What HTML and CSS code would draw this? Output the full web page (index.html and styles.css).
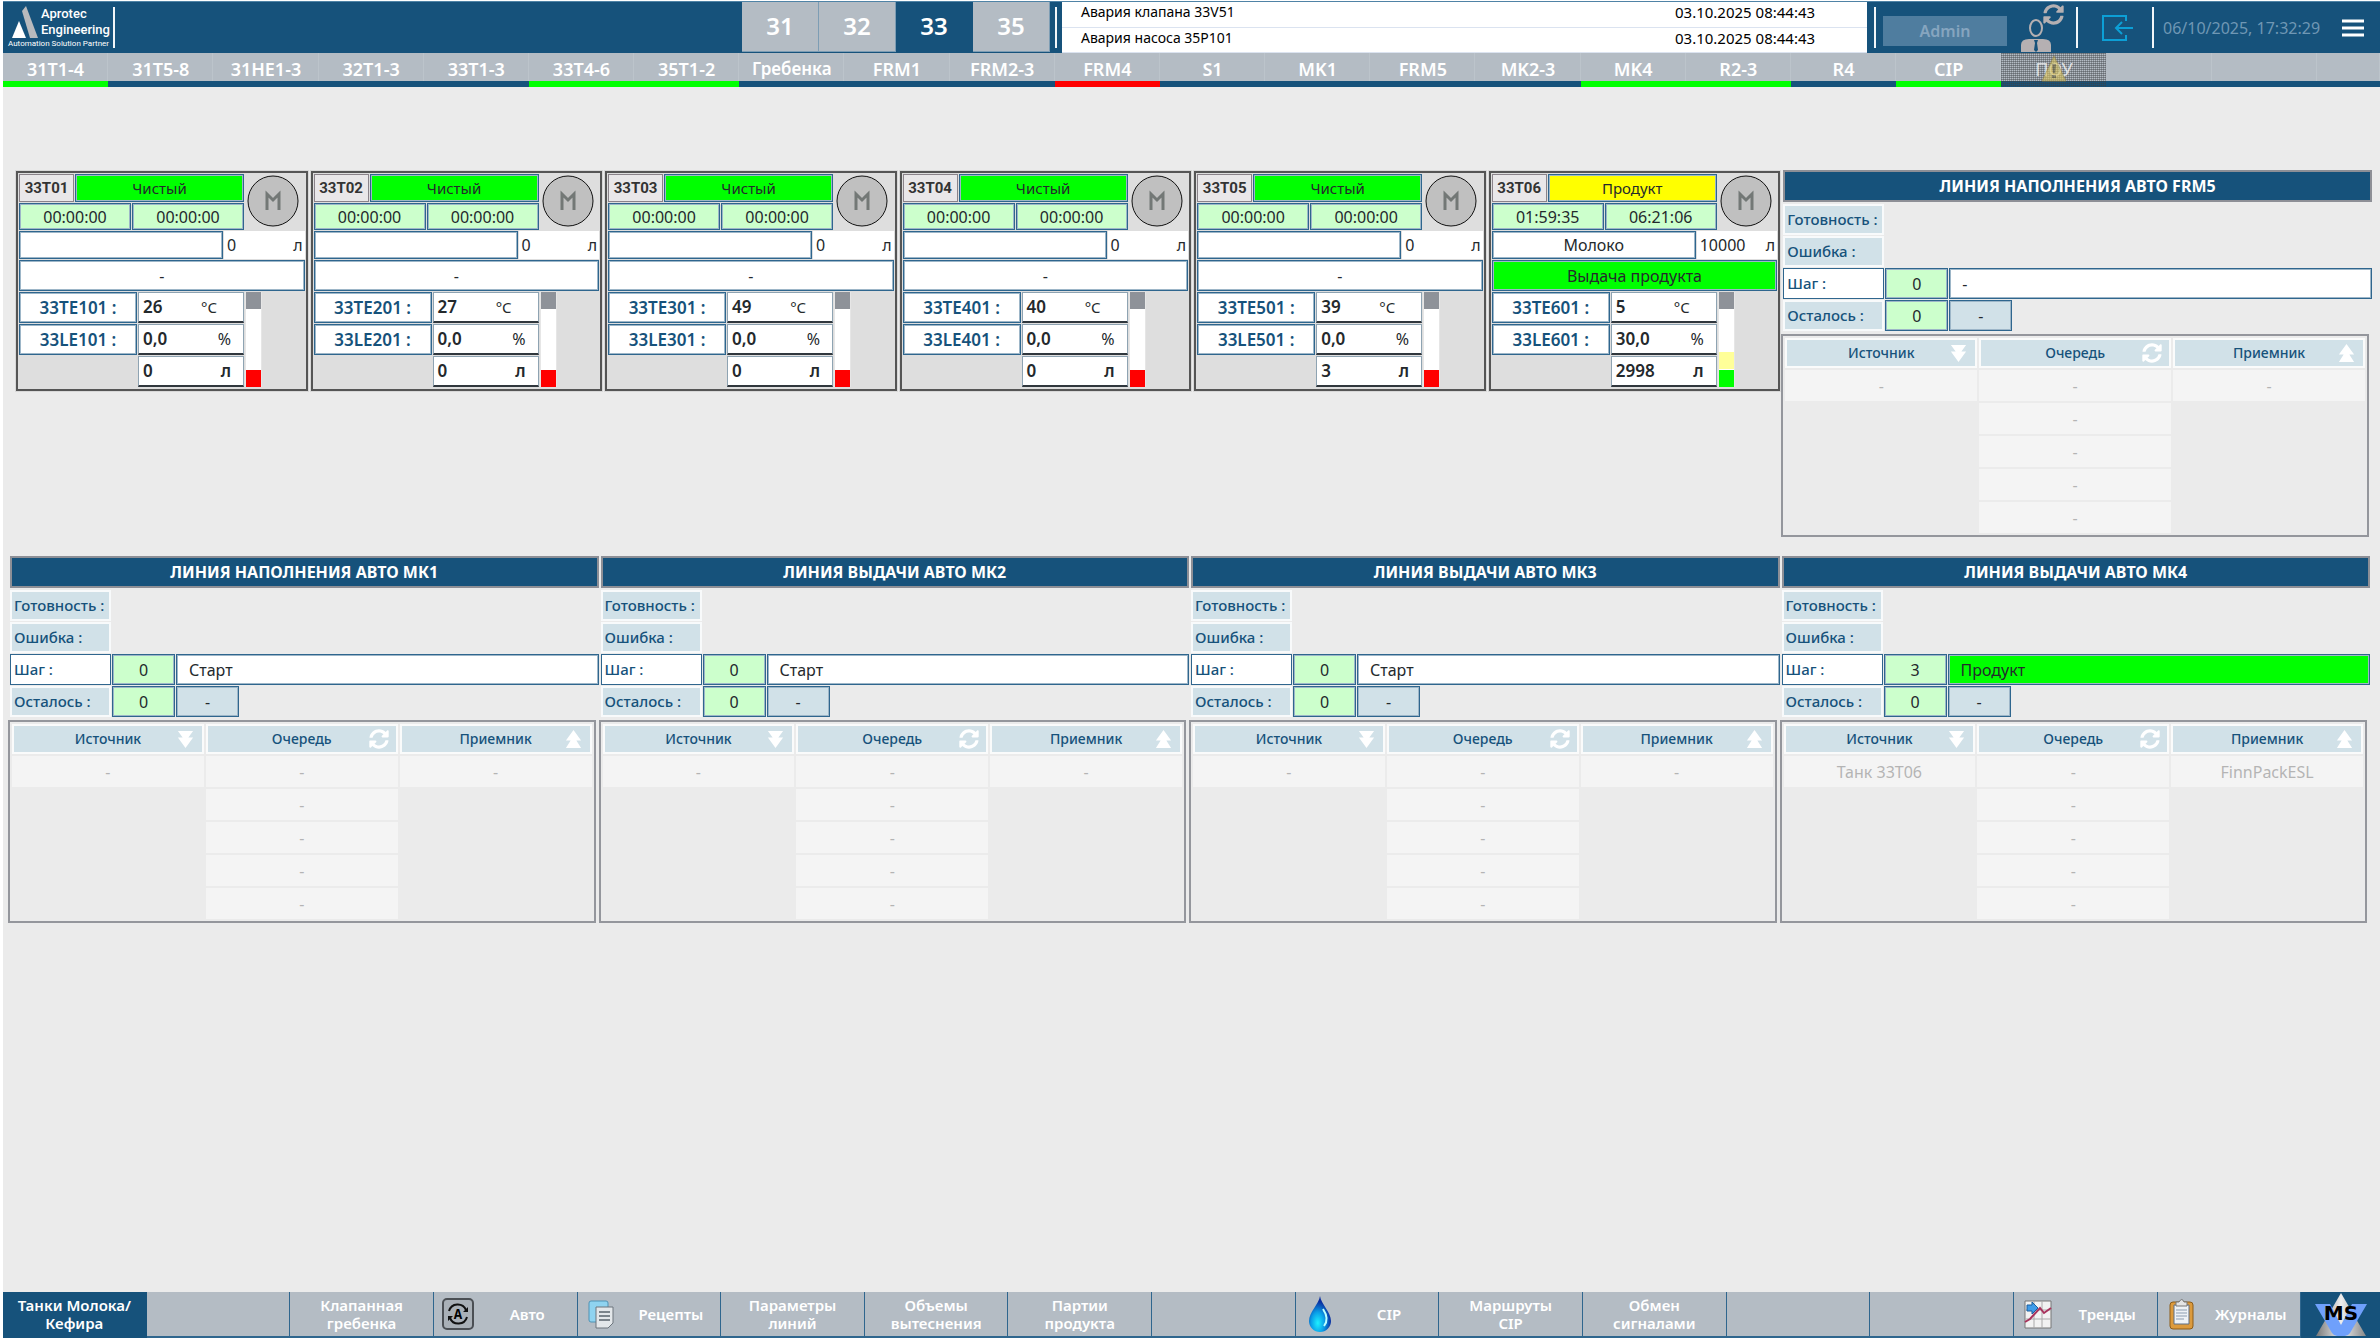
FILE: index.html
```html
<!DOCTYPE html>
<html lang="ru">
<head>
<meta charset="utf-8">
<meta name="viewport" content="width=device-width, initial-scale=1">
<title>Танки Молока/Кефира</title>
<link rel="stylesheet" href="styles.css">
</head>
<body>
<svg class="sprite" aria-hidden="true">
  <symbol id="i-sync" viewBox="0 0 512 512"><path fill="currentColor" d="M370.72 133.28C339.458 104.008 298.888 87.962 255.848 88c-77.458.068-144.328 53.178-162.791 126.85-1.344 5.363-6.122 9.15-11.651 9.15H24.103c-7.498 0-13.194-6.807-11.807-14.176C33.933 94.924 134.813 8 256 8c66.448 0 126.791 26.136 171.315 68.685L463.03 40.97C478.149 25.851 504 36.559 504 57.941V192c0 13.255-10.745 24-24 24H345.941c-21.382 0-32.09-25.851-16.971-40.971l41.75-41.749zM32 296h134.059c21.382 0 32.09 25.851 16.971 40.971l-41.75 41.75c31.262 29.273 71.835 45.319 114.876 45.28 77.418-.07 144.315-53.144 162.787-126.849 1.344-5.363 6.122-9.15 11.651-9.15h57.304c7.498 0 13.194 6.807 11.807 14.176C478.067 417.076 377.187 504 256 504c-66.448 0-126.791-26.136-171.315-68.685L48.97 471.03C33.851 486.149 8 475.441 8 454.059V320c0-13.255 10.745-24 24-24z"/></symbol>
  <symbol id="i-down" viewBox="0 0 20 20"><path fill="currentColor" d="M2 1h16l-5 7h5l-8 11L2 8h5z"/></symbol>
  <symbol id="i-up" viewBox="0 0 20 20"><path fill="currentColor" d="M2 19h16l-5-8h5L10 0 2 11h5z"/></symbol>
</svg>

<header class="top">
  <a class="brand" href="#">
    <svg class="brand-mark" viewBox="0 0 28 32" aria-hidden="true"><path fill="#b9babd" d="M10 5l4-5 12 32H18z"/><path fill="#fff" d="M0 32l7-17 7 17z"/></svg>
    <span class="brand-name">Aprotec<br>Engineering</span>
    <span class="brand-tag">Automation Solution Partner</span>
  </a>
  <i class="rule"></i>
  <div class="areas">
    <button type="button">31</button>
    <button type="button">32</button>
    <button type="button" class="is-on">33</button>
    <button type="button">35</button>
  </div>
  <i class="rule"></i>
  <table class="alarms">
    <tr><td>Авария клапана 33V51</td><td class="when">03.10.2025 08:44:43</td></tr>
    <tr><td>Авария насоса 35P101</td><td class="when">03.10.2025 08:44:43</td></tr>
  </table>
  <div class="session">
    <i class="rule"></i>
    <button type="button" class="user" disabled>Admin</button>
    <button type="button" class="icon-btn" aria-label="Сменить пользователя">
      <svg width="46" height="48" viewBox="0 0 46 48">
        <ellipse cx="15" cy="24" rx="6" ry="8" fill="none" stroke="#b5b0b2" stroke-width="2"/>
        <path fill="#b5b0b2" d="M0 48v-7q0-6 8-6h14q8 0 8 6v7z"/>
        <path fill="#16527b" d="M13 36h4l-1 3 1 7-2 2-2-2 1-7z"/>
        <use href="#i-sync" x="22" y="0" width="21" height="21" color="#b5b0b2"/>
      </svg>
    </button>
    <i class="rule"></i>
    <button type="button" class="icon-btn" aria-label="Выход">
      <svg width="33" height="28" viewBox="0 0 33 28" fill="none" stroke="#0c9fd6" stroke-width="2"><path d="M25 7V2H2v24h23v-5M32 14H15M21 8l-6 6 6 6"/></svg>
    </button>
    <i class="rule"></i>
    <time class="clock">06/10/2025, 17:32:29</time>
    <button type="button" class="icon-btn menu" aria-label="Меню">
      <svg width="22" height="18" viewBox="0 0 22 18" stroke="#fff" stroke-width="3"><path d="M0 2h22M0 9h22M0 16h22"/></svg>
    </button>
  </div>
</header>

<nav class="tabs">
  <a href="#" class="ok">31T1-4</a><a href="#">31T5-8</a><a href="#">31HE1-3</a><a href="#">32T1-3</a><a href="#">33T1-3</a><a href="#" class="ok">33T4-6</a><a href="#" class="ok">35T1-2</a><a href="#" class="small">Гребенка</a><a href="#">FRM1</a><a href="#">FRM2-3</a><a href="#" class="alarm">FRM4</a><a href="#">S1</a><a href="#">MK1</a><a href="#">FRM5</a><a href="#">MK2-3</a><a href="#" class="ok">MK4</a><a href="#" class="ok">R2-3</a><a href="#">R4</a><a href="#" class="ok">CIP</a><a href="#" class="blocked"><span>ПОУ</span><svg class="warn" width="28" height="28" viewBox="0 0 28 28" aria-hidden="true"><path fill="#d9c35a" stroke="#a08c3c" d="M14 1l12 25H2z"/><path fill="#6f6637" d="M12 9h4l-1 9h-2zM12 20h4v3h-4z"/></svg></a><a href="#"></a><a href="#"></a><a href="#" class="cut"></a>
</nav>

<main>
  <section class="upper">
    <div class="tanks" id="tanks"></div>
    <div id="line-top"></div>
  </section>
  <section class="lines" id="lines"></section>
</main>

<footer class="bottom">
  <a href="#" class="is-on">Танки Молока/<br>Кефира</a>
  <a href="#"></a>
  <a href="#">Клапанная<br>гребенка</a>
  <a href="#" class="with-icon">
    <svg width="32" height="32" viewBox="0 0 32 32" aria-hidden="true"><rect x="1" y="1" width="30" height="30" rx="4" fill="#a9b0b7" stroke="#4b4f54" stroke-width="2"/><path d="M7 13a9 9 0 0 1 17-1M25 19a9 9 0 0 1-17 1" fill="none" stroke="#111" stroke-width="2"/><path d="M26 9v5h-5zM6 23v-5h5z" fill="#111"/><text x="16" y="21" class="auto-a">A</text></svg>
    <span>Авто</span></a>
  <a href="#" class="with-icon">
    <svg width="32" height="32" viewBox="0 0 32 32" aria-hidden="true"><rect x="3" y="3" width="19" height="21" rx="2" fill="#8fd3f0" stroke="#4f93b5"/><path d="M10 9h17v16l-5 5H10z" fill="#e3e7ea" stroke="#6c757d"/><path d="M13 14h11M13 18h11M13 22h11" stroke="#7b848b" stroke-width="2"/></svg>
    <span>Рецепты</span></a>
  <a href="#">Параметры<br>линий</a>
  <a href="#">Объемы<br>вытеснения</a>
  <a href="#">Партии<br>продукта</a>
  <a href="#"></a>
  <a href="#" class="with-icon">
    <svg width="32" height="36" viewBox="0 0 32 36" aria-hidden="true"><defs><radialGradient id="drop" cx=".4" cy=".75" r=".6"><stop offset="0" stop-color="#1ef0ff"/><stop offset=".5" stop-color="#0a9fe8"/><stop offset="1" stop-color="#0a2ea0"/></radialGradient></defs><path fill="url(#drop)" d="M16 0c1 8 11 16 11 25a11 11 0 0 1-22 0C5 16 15 8 16 0z"/><path d="M19 13c4 6 5 12 1 17" fill="none" stroke="#bff" stroke-width="2"/></svg>
    <span>CIP</span></a>
  <a href="#">Маршруты<br>CIP</a>
  <a href="#">Обмен<br>сигналами</a>
  <a href="#"></a>
  <a href="#"></a>
  <a href="#" class="with-icon">
    <svg width="32" height="32" viewBox="0 0 32 32" aria-hidden="true"><path fill="#f2f2f2" stroke="#777" d="M3 3h26v27H3z"/><path d="M12 3v27M20 3v27M3 12h26M3 21h26" stroke="#aaa"/><path d="M3 24l5-3 10-11 4 5 7-5" fill="none" stroke="#a8325c" stroke-width="2"/><path d="M5 7h5V4l6 6-6 6v-3H5z" fill="#3f9be8" stroke="#1c5f9e"/></svg>
    <span>Тренды</span></a>
  <a href="#" class="with-icon">
    <svg width="32" height="32" viewBox="0 0 32 32" aria-hidden="true"><rect x="4" y="4" width="23" height="27" rx="3" fill="#dc9a3c" stroke="#8d5c18"/><path fill="#eef2f6" stroke="#5f6f82" d="M8 7h15v19H8z"/><path d="M10 12h11M10 15h11M10 18h11M10 21h8" stroke="#8b9cb0"/><path fill="#e4e4e4" stroke="#777" d="M10 8V4h3q3-5 5 0h3v4z"/></svg>
    <span>Журналы</span></a>
  <a href="#" class="is-on logo" aria-label="MS">
    <svg width="52" height="44" viewBox="0 0 52 44" aria-hidden="true"><defs><linearGradient id="tri" x1="0" x2="1"><stop offset="0" stop-color="#777"/><stop offset=".5" stop-color="#eee"/><stop offset="1" stop-color="#888"/></linearGradient></defs><path fill="url(#tri)" d="M26 0l25 43H1z"/><path fill="#6fa0fb" d="M0 11h15l11 21 11-21h15L35 40q-2 3-5 3h-8q-3 0-5-3z"/><text x="26" y="27" class="ms">MS</text></svg>
  </a>
</footer>
<script src="app.js"></script>
</body>
</html>
```
FILE: styles.css
```css
* { box-sizing: border-box; }

:root {
  --navy: #16527b;
  --grey: #b4bcc4;
  --page: #ebebeb;
  --pale: #d1e1e8;
  --mint: #ccffcc;
  --green: #00ff00;
  --ink: #24292c;
  --edge: #2f668e;
}

body {
  margin: 0;
  padding: 1px 0 3px 3px;
  min-height: 100vh;
  display: flex;
  flex-direction: column;
  background: #fff;
  color: var(--ink);
  font: 16px/20px "Noto Sans", sans-serif;
}

a { color: inherit; text-decoration: none; }
button { font: inherit; color: inherit; border: 0; padding: 0; background: none; }
svg { display: block; flex: none; }
.sprite { position: absolute; width: 0; height: 0; }

/* header */
.top {
  display: flex;
  align-items: center;
  height: 52px;
  background: var(--navy);
  border-top: 1px solid #4f83a6;
  color: #fff;
}
.rule { flex: none; width: 2px; height: 41px; background: #f2f6f9; }
.brand {
  width: 110px;
  padding-left: 5px;
  display: grid;
  grid-template-columns: 28px 1fr;
  column-gap: 4px;
}
.brand-mark { width: 28px; height: 32px; margin-left: 4px; }
.brand-name { font: 500 13px/16px Roboto, sans-serif; padding-left: 1px; }
.brand-tag { grid-column: 1 / -1; font: 8px/12px Roboto, sans-serif; white-space: nowrap; }
.areas {
  margin-left: auto;
  margin-right: 5px;
  display: flex;
  align-self: flex-start;
}
.areas button {
  width: 77px;
  height: 50px;
  padding-bottom: 2px;
  background: var(--grey);
  border-right: 1px solid #7d9db4;
  border-bottom: 1px solid #7d9db4;
  font-size: 24px;
  font-weight: 600;
}
.areas button.is-on { background: var(--navy); border-color: var(--navy); }
.alarms {
  width: 805px;
  margin-left: 5px;
  align-self: stretch;
  border-collapse: collapse;
  background: #fff;
  color: #000;
  font-size: 14px;
}
.alarms td { height: 25px; padding: 0 0 4px 19px; border-bottom: 1px solid #dbe3f0; }
.alarms .when { width: 192px; padding-left: 0; font-size: 15px; }
.session { width: 513px; padding-left: 7px; display: flex; align-items: center; }
.user {
  width: 124px;
  height: 30px;
  margin: 6px 14px 0 7px;
  background: #4f7d9f;
  color: #86a5bf;
  font-weight: 600;
}
.icon-btn + .rule { margin: 0 23px 0 9px; }
.icon-btn + .rule:has(+ .clock) { margin: 0 9px 0 18px; }
.menu { margin: 0 16px 0 auto; }
.clock { color: #6f97b4; white-space: nowrap; }

/* section tabs */
.tabs { display: flex; height: 34px; color: #fff; font-size: 18px; font-weight: 600; background: var(--grey); }
.tabs a {
  position: relative;
  flex: 105;
  min-width: 0;
  padding-top: 4px;
  border-bottom: 6px solid var(--navy);
  box-shadow: inset -1px 0 #bcc4cb;
  line-height: 24px;
  text-align: center;
}
.tabs .cut { flex: 63; }
.tabs .small { font-size: 17px; }
.tabs .ok { border-bottom-color: var(--green); }
.tabs .alarm { border-bottom-color: #f00; }
.tabs .blocked { font-weight: 400; }
.tabs .blocked::before {
  content: "";
  position: absolute;
  inset: 0 0 -6px;
  background:
    repeating-linear-gradient(0deg, transparent 0 1px, rgb(60 64 68 / 45%) 1px 2px),
    repeating-linear-gradient(90deg, rgb(60 64 68 / 35%) 0 1px, transparent 1px 2px);
}
.blocked span { position: relative; opacity: .7; }
.warn { position: absolute; left: 50%; top: 2px; margin-left: -14px; opacity: .6; }

/* work area */
main { flex: 1; background: var(--page); padding: 83px 7px 30px; }
.upper { display: grid; grid-template-columns: 1765fr 589fr; gap: 3px; margin: 0 1px 0 6px; }
.tanks { display: grid; grid-template-columns: repeat(6, 1fr); gap: 3px; margin-top: 1px; align-items: start; }
.lines { display: grid; grid-template-columns: repeat(4, 1fr); gap: 2px; margin: 19px 3px 0 0; }

/* tank card */
.tank {
  display: flex;
  flex-direction: column;
  gap: 1px;
  height: 220px;
  padding: 1px;
  background: #dedede;
  border: 2px solid #555;
  outline: 1px solid #d8d8d8;
}
.row { display: flex; gap: 1px; }
.box {
  display: flex;
  align-items: center;
  justify-content: center;
  border: 1px solid var(--edge);
  background: #fff;
  box-shadow: 0 0 0 1px #9db6c8 inset;
}
.clean { background: var(--green); }
.product { background: #ff0; }
.timer { background: var(--mint); }
.tank-head { display: flex; gap: 3px; }
.tank-head-main { width: 225px; display: flex; flex-direction: column; gap: 1px; }
.tank-head .box { height: 28px; flex: 1; }
.tank-head .timer { height: 27px; }
.tank-head .state { font-size: 15px; padding-bottom: 1px; }
.tank-head .tag {
  flex: none;
  width: 55px;
  border-color: #8a838a;
  box-shadow: none;
  background: #e9e7e9;
  color: #333;
  font: bold 15px/20px Roboto, sans-serif;
}
.motor { margin-top: 1px; }
.qty .box { width: 204px; height: 28px; }
.qty .amount {
  flex: 1;
  display: flex;
  align-items: center;
  justify-content: space-between;
  padding: 0 2px 0 3px;
  background: #fff;
}
.unit { font-weight: 400; font-size: 16px; }
.status { height: 31px; }
.readings { display: grid; grid-template-columns: 118px 106px 17px; gap: 1px; }
.readings .box { height: 31px; font-size: 17px; font-weight: 600; }
.readings .tagname { color: var(--navy); grid-column: 1; }
.readings .value {
  grid-column: 2;
  justify-content: space-between;
  padding: 0 12px 0 4px;
  border-color: #8ea3b2;
  border-bottom: 2px solid #30373d;
  box-shadow: none;
}
.readings .value.temp { padding-right: 26px; }
.temp .unit { font-size: 15px; }
.level { grid-column: 3; grid-row: 1 / 4; display: flex; flex-direction: column; gap: 1px; background: #fff; border: 1px solid #e6e6e6; border-width: 0 1px; }
.level .cap { height: 17px; background: #8e9299; }
.level .air { flex: 1; }
.level .fill { height: 17px; background: #ffff99; }
.level .foot { height: 17px; background: #f00; }
.level .foot.on { background: var(--green); }

/* line panel */
.line h2 {
  margin: 0;
  height: 32px;
  border: 2px solid #8d8f96;
  background: var(--navy);
  color: #fff;
  font-size: 16px;
  font-weight: 700;
  line-height: 29px;
  text-align: center;
}
.facts { display: grid; grid-template-columns: 101px 63px 63px 1fr; gap: 1px; margin-top: 2px; }
.facts > * { height: 31px; }
.facts .name {
  grid-column: 1;
  padding-left: 2px;
  border: 2px solid #f8fafb;
  background: var(--pale);
  color: var(--navy);
  font-size: 15px;
  font-weight: 500;
  line-height: 26px;
  white-space: nowrap;
}
.facts .name.step { border: 1px solid var(--edge); background: #fff; padding-left: 3px; line-height: 28px; }
.facts .box { padding-top: 1px; }
.facts .what { grid-column: 3 / 5; justify-content: flex-start; padding-left: 12px; }
.facts .dash { background: var(--pale); }
.route {
  width: calc(100% - 1px);
  margin: 3px 0 0 -2px;
  table-layout: fixed;
  border: 2px solid #94969c;
  border-spacing: 2px;
  color: #b4b4b4;
}
.route th, .route td { padding: 0; text-align: center; }
.route th { height: 30px; border: 2px solid #fafbfb; background: var(--pale); color: var(--navy); font-size: 14px; font-weight: 500; }
.route td { height: 31px; background: #f4f4f4; }
.route td.none { background: none; }
.th { display: grid; grid-template-columns: 1fr auto 1fr; align-items: center; }
.th svg { grid-column: 3; justify-self: end; margin-right: 7px; color: #fff; }
.th span { grid-column: 2; }

/* bottom menu */
.bottom {
  display: grid;
  grid-template-columns: repeat(16, minmax(0, 144fr)) minmax(0, 79fr);
  height: 46px;
  background: var(--grey);
  color: #fff;
  font-size: 15px;
  font-weight: 600;
  line-height: 18px;
}
.bottom a {
  display: flex;
  align-items: center;
  justify-content: center;
  padding-bottom: 1px;
  text-align: center;
  border-right: 1px solid var(--edge);
  border-bottom: 2px solid var(--edge);
}
.bottom .is-on { background: var(--navy); border-color: var(--navy); }
.bottom .with-icon { padding: 0 8px 1px; }
.bottom .with-icon span { flex: 1; padding-left: 12px; }
.bottom .logo { border: 0; }
.auto-a { font: bold 14px "Liberation Mono", monospace; text-anchor: middle; }
.ms { font: bold 20px "DejaVu Sans", sans-serif; text-anchor: middle; }
```
FILE: app.js
```js
const tanks = [
  { n: 1, t: 26 }, { n: 2, t: 27 }, { n: 3, t: 49 }, { n: 4, t: 40 },
  { n: 5, t: 39, litres: 3 },
  { n: 6, t: 5, litres: 2998, level: '30,0', state: 'Продукт', product: 'Молоко',
    amount: 10000, status: 'Выдача продукта', t1: '01:59:35', t2: '06:21:06' },
];

const tankCard = (k) => `
<article class="tank">
  <div class="tank-head">
    <div class="tank-head-main">
      <div class="row"><span class="box tag">33T0${k.n}</span><span class="box state ${k.state ? 'product' : 'clean'}">${k.state || 'Чистый'}</span></div>
      <div class="row"><span class="box timer">${k.t1 || '00:00:00'}</span><span class="box timer">${k.t2 || '00:00:00'}</span></div>
    </div>
    <svg class="motor" width="52" height="52" viewBox="0 0 52 52"><circle cx="26" cy="26" r="25" fill="#c0c0c0" stroke="#111"/><path d="M20 35V19l6 6 6-6v16" fill="none" stroke="#737876" stroke-width="3"/></svg>
  </div>
  <div class="row qty"><span class="box">${k.product || ''}</span><span class="amount"><span>${k.amount || 0}</span><span>л</span></span></div>
  <div class="box status ${k.status ? 'clean' : ''}">${k.status || '-'}</div>
  <div class="readings">
    <span class="box tagname">33TE${k.n}01 :</span><span class="box value temp">${k.t}<span class="unit">°C</span></span>
    <span class="box tagname">33LE${k.n}01 :</span><span class="box value">${k.level || '0,0'}<span class="unit">%</span></span>
    <span class="box value">${k.litres || 0}<span>л</span></span>
    <div class="level"><i class="cap"></i><i class="air"></i>${k.level ? '<i class="fill"></i>' : ''}<i class="foot ${k.level ? 'on' : ''}"></i></div>
  </div>
</article>`;

const head = (text, icon, size) =>
  `<th><div class="th"><span>${text}</span><svg width="${size}" height="${size}"><use href="#${icon}"/></svg></div></th>`;

const linePanel = (p) => `
<article class="line">
  <h2>${p.title}</h2>
  <div class="facts">
    <span class="name">Готовность :</span>
    <span class="name">Ошибка :</span>
    <span class="name step">Шаг :</span><span class="box timer">${p.step || 0}</span><span class="box what ${p.step ? 'clean' : ''}">${p.text}</span>
    <span class="name">Осталось :</span><span class="box timer">0</span><span class="box dash">-</span>
  </div>
  <table class="route">
    <thead><tr>${head('Источник', 'i-down', 19)}${head('Очередь', 'i-sync', 20)}${head('Приемник', 'i-up', 19)}</tr></thead>
    <tbody>
      <tr><td>${p.from || '-'}</td><td>-</td><td>${p.to || '-'}</td></tr>
      ${'<tr><td class="none"></td><td>-</td><td class="none"></td></tr>'.repeat(4)}
    </tbody>
  </table>
</article>`;

const lines = [
  { title: 'ЛИНИЯ НАПОЛНЕНИЯ АВТО МК1', text: 'Старт' },
  { title: 'ЛИНИЯ ВЫДАЧИ АВТО МК2', text: 'Старт' },
  { title: 'ЛИНИЯ ВЫДАЧИ АВТО МК3', text: 'Старт' },
  { title: 'ЛИНИЯ ВЫДАЧИ АВТО МК4', text: 'Продукт', step: 3, from: 'Танк 33Т06', to: 'FinnPackESL' },
];

document.getElementById('tanks').innerHTML = tanks.map(tankCard).join('');
document.getElementById('line-top').innerHTML = linePanel({ title: 'ЛИНИЯ НАПОЛНЕНИЯ АВТО FRM5', text: '-' });
document.getElementById('lines').innerHTML = lines.map(linePanel).join('');
```
